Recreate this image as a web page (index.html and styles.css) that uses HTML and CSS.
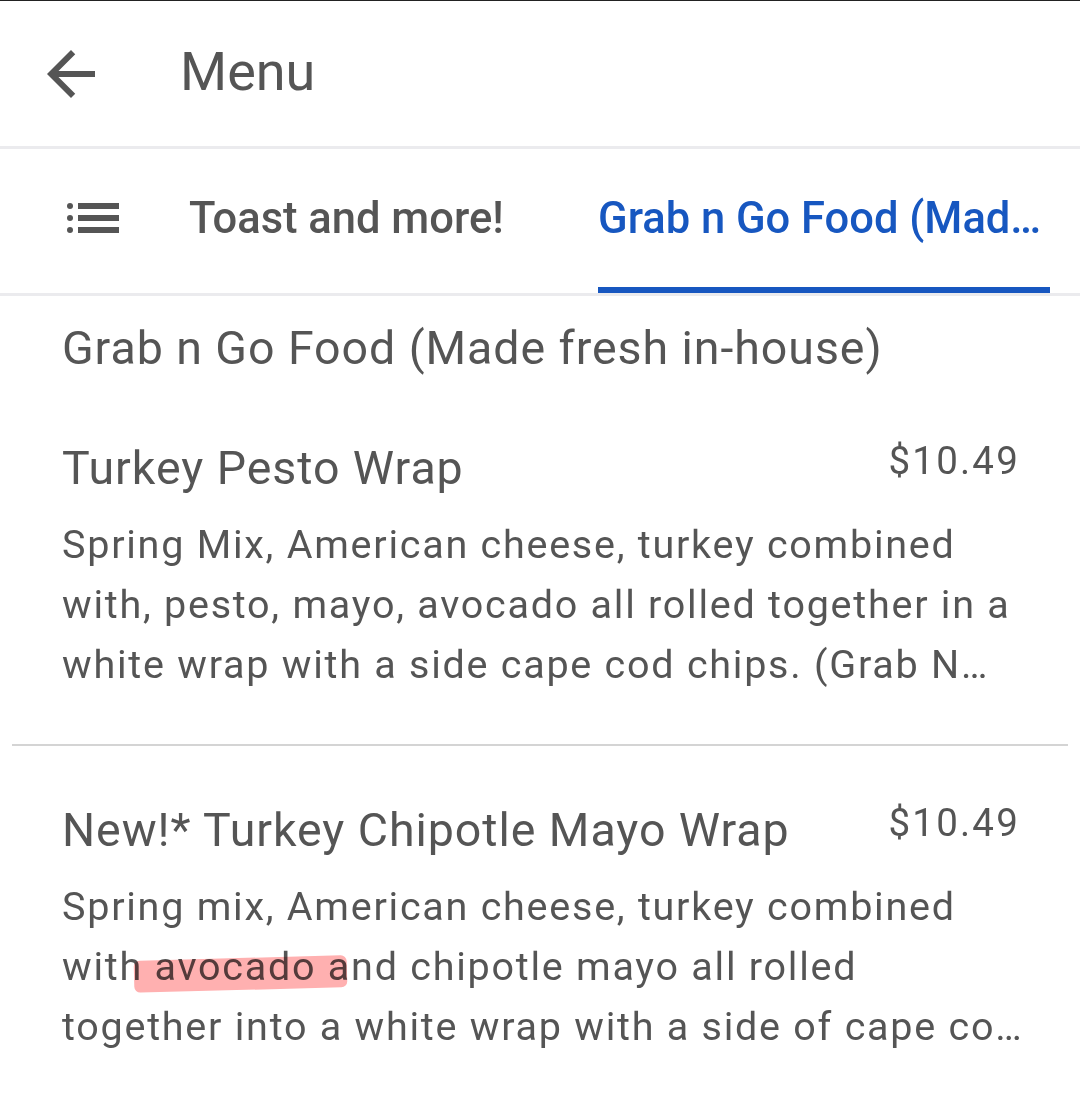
FILE: index.html
```html
<!DOCTYPE html>
<html lang="en">
<head>
  <meta charset="UTF-8" />
  <meta name="viewport" content="width=device-width, initial-scale=1.0"/>
  <title>Menu</title>
  <link rel="stylesheet" href="styles.css">
</head>
<body>

  <!-- Top app bar -->
  <header class="appbar">
    <button class="back" aria-label="Back">
      <svg viewBox="0 0 24 24" width="72" height="72"><path d="M20 11H7.83l5.59-5.59L12 4l-8 8 8 8 1.41-1.41L7.83 13H20v-2z"/></svg>
    </button>
    <h1 class="title">Menu</h1>
  </header>

  <!-- Category tabs -->
  <nav class="tabs">
    <span class="tabs-icon">
      <svg viewBox="0 0 54 32" width="54" height="32">
        <circle cx="3" cy="3" r="3"/><circle cx="3" cy="15" r="3"/><circle cx="3" cy="27" r="3"/>
        <rect x="11" y="0" width="41" height="6"/><rect x="11" y="12" width="41" height="6"/><rect x="11" y="24" width="41" height="6"/>
      </svg>
    </span>
    <a class="tab">Toast and more!</a>
    <a class="tab active">Grab n Go Food (Made fresh in-house)</a>
  </nav>

  <main class="menu">
    <h2 class="section">Grab n Go Food (Made fresh in-house)</h2>

    <div class="item">
      <div class="item-head">
        <h3 class="item-name">Turkey Pesto Wrap</h3>
        <span class="price">$10.49</span>
      </div>
      <p class="desc">Spring Mix, American cheese, turkey combined with, pesto, mayo, avocado all rolled together in a white wrap with a side cape cod chips. (Grab N Go item, made fresh daily)</p>
    </div>

    <div class="item">
      <div class="item-head">
        <h3 class="item-name">New!* Turkey Chipotle Mayo Wrap</h3>
        <span class="price">$10.49</span>
      </div>
      <p class="desc">Spring mix, American cheese, turkey combined with <span class="mark">avocado a</span>nd chipotle mayo all rolled <span class="desc-last">together into a white wrap with a side of cape cod chips. (Grab N Go item)</span></p>
    </div>
  </main>

</body>
</html>
```

FILE: styles.css
```css
body {
  margin: 0;
  border-top: 1px solid #222;
  font-family: Roboto, "Noto Sans", sans-serif;
  color: #555;
  background: #fff;
}

.appbar {
  display: flex; align-items: center;
  height: 145px;
  border-bottom: 3px solid #ebebee;
}
.back {
  border: none; background: none; padding: 0;
  margin-left: 35px; width: 72px; height: 72px;
  fill: #555;
}
.back svg { display: block; }
.title {
  margin: 0 0 5px 73px;
  font-size: 54px; font-weight: 400;
}

.tabs {
  display: flex; align-items: stretch;
  height: 144px;
  border-bottom: 3px solid #ebebee;
  overflow: hidden;
}
.tabs-icon {
  display: flex; align-items: center;
  margin: 0 0 4px 67px; fill: #555;
}
.tabs-icon svg { display: block; }
.tab {
  display: flex; align-items: center;
  padding-bottom: 6px;
  font-size: 43.5px; font-weight: 500;
  white-space: nowrap;
}
.tab:nth-of-type(1) { margin-left: 68px; }
.tab.active {
  display: block;
  margin: 0 30px 0 auto;
  width: 444px; padding: 0 8px 0 0;
  line-height: 140px;
  overflow: hidden; text-overflow: ellipsis;
  color: #1757c0;
  border-bottom: 6px solid #1757c0;
}

.menu { padding: 22px 12px 0; }
.section {
  margin: 0 50px 6px;
  font-size: 46.5px; font-weight: 400; line-height: 60px;
  letter-spacing: 0.95px;
}
.item {
  padding: 54px 50px 49px;
  border-bottom: 2px solid #d4d4d4;
}
.item:last-child { border-bottom: none; }
.item-head {
  display: flex; justify-content: space-between; align-items: flex-start;
}
.item-name {
  margin: 0;
  font-size: 46.5px; font-weight: 400; line-height: 60px;
  letter-spacing: 0.95px;
}
.price {
  font-size: 38.5px; line-height: 46px;
  letter-spacing: 2.2px; margin-right: -2px;
}
.desc {
  margin: 17px -4px 0 0;
  font-size: 39.5px; line-height: 60px;
  letter-spacing: 1.75px;
  display: -webkit-box;
  -webkit-box-orient: vertical;
  -webkit-line-clamp: 3;
  overflow: hidden;
}
.desc-last {
  display: block;
  white-space: nowrap;
  overflow: hidden; text-overflow: ellipsis;
}

/* marker scribble over the text */
.mark { position: relative; }
.mark::after {
  content: "";
  position: absolute;
  left: -21px; right: 5px; top: 15px; height: 32px;
  background: #ffb0b0;
  border-radius: 6px;
  transform: rotate(-1.5deg);
  mix-blend-mode: multiply;
}
```
